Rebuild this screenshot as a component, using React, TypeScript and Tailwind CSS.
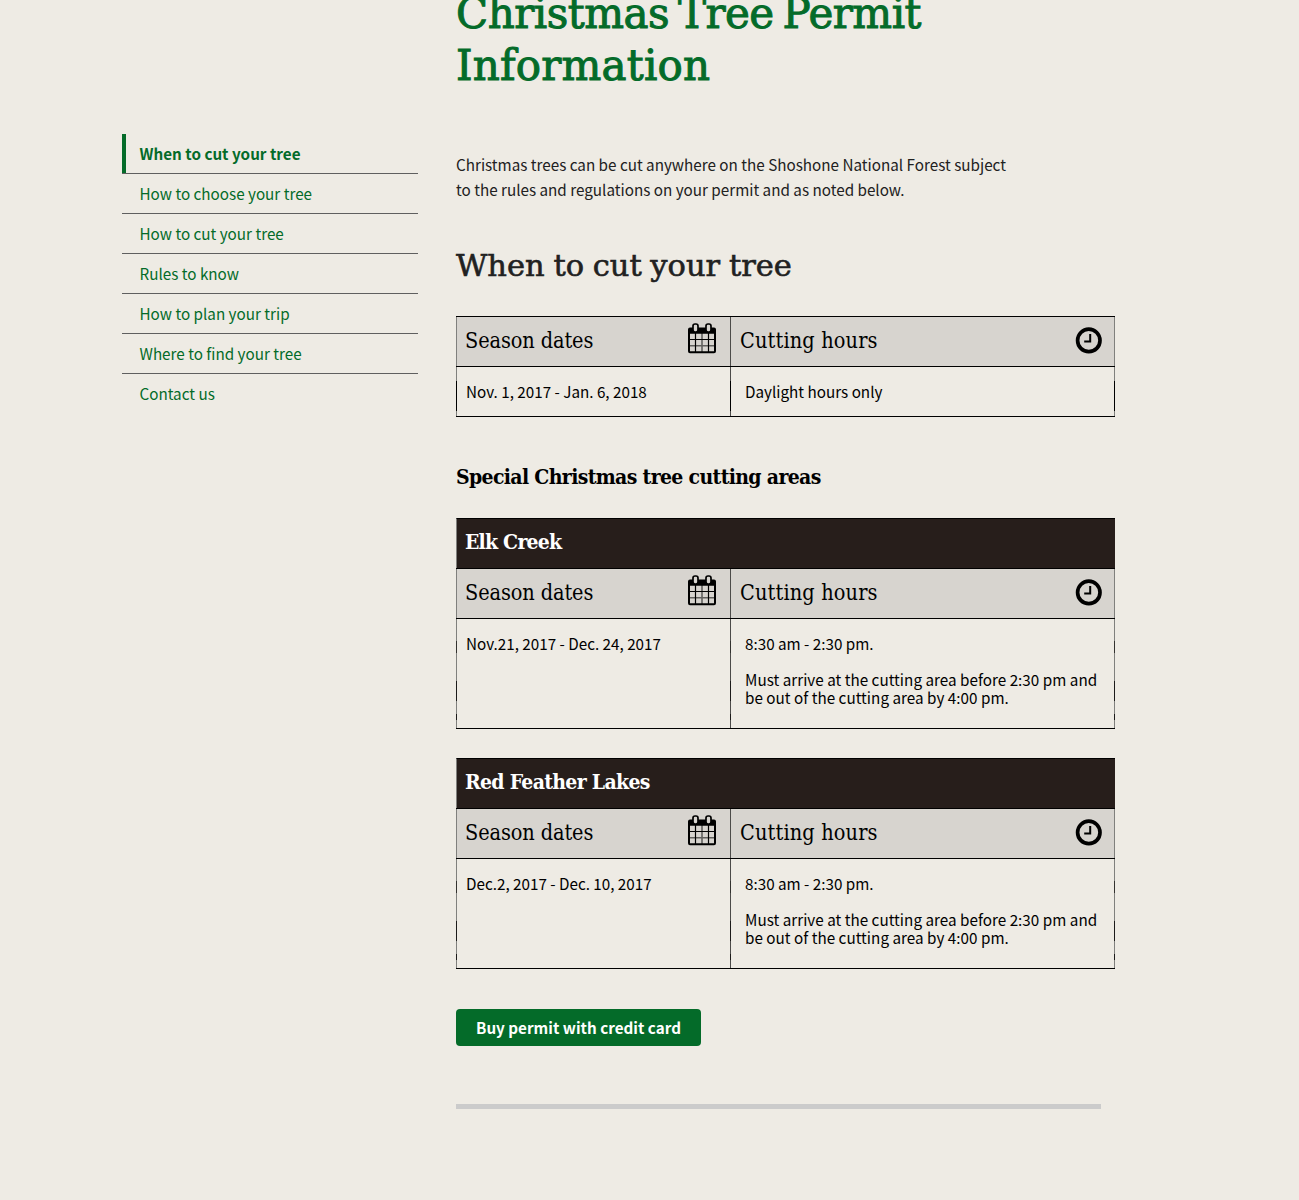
const sans = "font-['Noto_Sans_CJK_SC','Open_Sans',sans-serif] text-[15.24px]";
const serif = "font-['DejaVu_Serif_Condensed','DejaVu_Serif',serif]";
const wideSerif = "font-['DejaVu_Serif',serif]";

const navItems = [
  "When to cut your tree",
  "How to choose your tree",
  "How to cut your tree",
  "Rules to know",
  "How to plan your trip",
  "Where to find your tree",
  "Contact us",
];

function CalendarIcon() {
  return (
    <svg width="30" height="32" viewBox="0 0 30 32" fill="none" stroke="#000">
      <path d="M1 7.6a2 2 0 0 1 2-2h24a2 2 0 0 1 2 2v4.2H1z" fill="#000" stroke="none" />
      <rect x="2" y="8" width="26" height="22.2" rx="1" strokeWidth="2" />
      <path d="M8.5 11v19M21.5 11v19M2 17.5h26" strokeWidth="1.2" />
      <path d="M15 11v19M2 23.7h26" strokeWidth="1.6" strokeOpacity=".55" />
      <rect x="6" y="2" width="5" height="8" rx="2" fill="#d7d4cf" strokeWidth="1.7" />
      <rect x="19" y="2" width="5" height="8" rx="2" fill="#d7d4cf" strokeWidth="1.7" />
    </svg>
  );
}

function ClockIcon() {
  return (
    <svg width="28" height="28" viewBox="0 0 28 28" fill="none" stroke="#000">
      <circle cx="13.8" cy="14.4" r="11.2" strokeWidth="3.7" />
      <path d="M15.2 8v7.4H9.2" strokeWidth="2" />
    </svg>
  );
}

/* Thin vertical rule whose lower part alternates between grey and black. */
function Rule({ tall, dark }: { tall: boolean; dark?: boolean }) {
  const grey = dark ? "bg-[#4c4b49]" : "bg-[#80807d]";
  return (
    <div className={`flex w-px flex-col ${grey}`}>
      {tall ? (
        <>
          <div className="mt-[22px] h-[12px] bg-[#33322f]" />
          <div className="mt-[28px] h-[20px] bg-[#1c1b1a]" />
          <div className="mt-[13px] h-[6px] bg-[#1c1b1a]" />
        </>
      ) : (
        <div className="mt-[14px] h-[30px] bg-black" />
      )}
    </div>
  );
}

interface SeasonProps {
  title?: string;
  titleTracking?: string;
  dates: string;
  hours: string;
  note?: string[];
}

function SeasonTable({ title, titleTracking = "", dates, hours, note }: SeasonProps) {
  const tall = Boolean(note);
  return (
    <section className="w-[659px] border-b border-black text-black">
      {title && (
        <div className="h-[50px] border-t border-l border-t-black border-l-[#80807d] bg-[#271e1b] pl-2">
          <h4 className={`${serif} ${titleTracking} text-[21px] leading-[45px] font-bold whitespace-nowrap text-white`}>
            {title}
          </h4>
        </div>
      )}
      <div className="flex h-[51px] border-y border-black bg-[#d7d4cf]">
        <div className="w-px bg-[#80807d]" />
        <div className="flex w-[273px] justify-between pr-[13px] pl-2">
          <h5 className={`${serif} text-[21.5px] leading-[47px] tracking-[-0.1px] whitespace-nowrap`}>Season dates</h5>
          <div className="mt-[5px]">
            <CalendarIcon />
          </div>
        </div>
        <div className="w-px bg-[#4c4b49]" />
        <div className="flex w-[383px] justify-between pr-[11px] pl-[9px]">
          <h5 className={`${serif} text-[21.5px] leading-[47px] tracking-[0.15px] whitespace-nowrap`}>Cutting hours</h5>
          <div className="mt-[9px]">
            <ClockIcon />
          </div>
        </div>
        <div className="w-px bg-[#80807d]" />
      </div>
      <div className={`${sans} flex leading-[18px] ${tall ? "h-[109px]" : "h-[49px]"}`}>
        <Rule tall={tall} />
        <p className="w-[273px] pt-[15px] pl-[9px] whitespace-nowrap">{dates}</p>
        <Rule tall={tall} dark />
        <div className="w-[383px] pt-[15px] pl-[14px] whitespace-nowrap">
          <p>{hours}</p>
          {note && (
            <p className="mt-[18px] tracking-[0.02px]">
              {note[0]}
              <br />
              {note[1]}
            </p>
          )}
        </div>
        <Rule tall={tall} />
      </div>
    </section>
  );
}

const arrival = ["Must arrive at the cutting area before 2:30 pm and", "be out of the cutting area by 4:00 pm."];

export default function App() {
  return (
    <div className="flex h-[1200px] items-start overflow-hidden bg-[#eeebe4] pl-[122px]">
      <nav className={`${sans} mt-[134px] w-[296px] text-[#046b29]`}>
        {navItems.map((item, i) => (
          <a
            key={item}
            href="#"
            className={`flex h-10 items-center ${i < navItems.length - 1 ? "border-b border-[#5f5f5f]" : ""}`}
          >
            <span className={`h-full w-1 ${i === 0 ? "bg-[#046b29]" : ""}`} />
            <span className={`ml-[13.5px] pb-px whitespace-nowrap ${i === 0 ? "font-bold" : ""}`}>{item}</span>
          </a>
        ))}
      </nav>

      <main className="ml-[38px] w-[659px]">
        <h1
          className={`${wideSerif} -mt-[12px] text-[42px] leading-[52px] whitespace-nowrap text-[#046b29] [-webkit-text-stroke:1px_#046b29]`}
        >
          <span className="block tracking-[-0.5px] [word-spacing:-4px]">Christmas Tree Permit</span>
          <span className="block tracking-[0.2px]">Information</span>
        </h1>

        <p className={`${sans} mt-[60px] leading-[25px] whitespace-nowrap text-[#212121]`}>
          Christmas trees can be cut anywhere on the Shoshone National Forest subject
          <br />
          to the rules and regulations on your permit and as noted below.
        </p>

        <h2
          className={`${wideSerif} mt-[44px] text-[30.5px] leading-[40px] whitespace-nowrap text-[#212121] [-webkit-text-stroke:0.6px_#212121] [word-spacing:-1px]`}
        >
          When to cut your tree
        </h2>

        <div className="mt-[30px]">
          <SeasonTable dates="Nov. 1, 2017 - Jan. 6, 2018" hours="Daylight hours only" />
        </div>

        <h3 className={`${serif} mt-[45px] text-[21px] leading-[30px] font-bold tracking-[-0.65px] whitespace-nowrap text-black`}>
          Special Christmas tree cutting areas
        </h3>

        <div className="mt-[26px] flex flex-col gap-[29px]">
          <SeasonTable
            title="Elk Creek"
            titleTracking="tracking-[-0.78px]"
            dates="Nov.21, 2017 - Dec. 24, 2017"
            hours="8:30 am - 2:30 pm."
            note={arrival}
          />
          <SeasonTable
            title="Red Feather Lakes"
            titleTracking="tracking-[-0.68px]"
            dates="Dec.2, 2017 - Dec. 10, 2017"
            hours="8:30 am - 2:30 pm."
            note={arrival}
          />
        </div>

        <button
          className={`${sans} mt-10 flex h-[37px] w-[245px] items-center justify-center rounded-[4px] bg-[#046b29] leading-none font-bold whitespace-nowrap text-white`}
        >
          Buy permit with credit card
        </button>

        <div className="mt-[58px] h-[5px] w-[645px] bg-[#cbcbcb]" />
      </main>
    </div>
  );
}
